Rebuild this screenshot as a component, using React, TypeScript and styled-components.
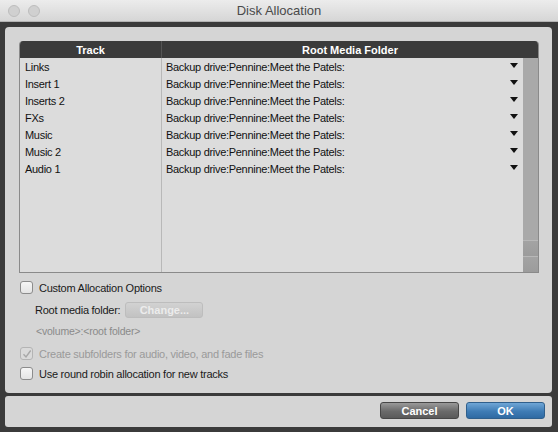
import React from 'react';
import styled, { createGlobalStyle } from 'styled-components';

const GlobalStyle = createGlobalStyle`
  html, body {
    margin: 0;
    padding: 0;
    background: #3b3b3b;
  }
  body {
    font-family: 'Liberation Sans', Arial, sans-serif;
  }
`;

const tracks = ['Links', 'Insert 1', 'Inserts 2', 'FXs', 'Music', 'Music 2', 'Audio 1'];
const ROOT = 'Backup drive:Pennine:Meet the Patels:';

const Window = styled.div`
  width: 558px;
  height: 432px;
  display: flex;
  flex-direction: column;
  background: #3b3b3b;
  overflow: hidden;
`;

const TitleBar = styled.div`
  height: 22px;
  flex: none;
  display: flex;
  align-items: center;
  position: relative;
  background: linear-gradient(#ececec, #d6d6d6);
  border-bottom: 1px solid #b4b4b4;
  box-sizing: border-box;
`;

const Lights = styled.div`
  display: flex;
  gap: 8px;
  padding-left: 8px;
`;

const Light = styled.span`
  width: 12px;
  height: 12px;
  border-radius: 50%;
  background: #d0d0d0;
  border: 1px solid #bdbdbd;
  box-sizing: border-box;
`;

const Title = styled.div`
  position: absolute;
  left: 0;
  right: 0;
  text-align: center;
  font-size: 13px;
  color: #4a4a4a;
  pointer-events: none;
`;

const Body = styled.div`
  flex: 1;
  display: flex;
  flex-direction: column;
  gap: 3px;
  padding: 5px 6px 5px 5px;
`;

const Panel = styled.div`
  height: 366px;
  box-sizing: border-box;
  background: #d5d5d5;
  border-radius: 4px;
  padding: 14px 13px 0 14px;
  display: flex;
  flex-direction: column;
`;

const Table = styled.div`
  height: 232px;
  display: grid;
  grid-template-columns: 141px 1fr 15px;
  grid-template-rows: 17px 1fr;
  border: 1px solid #8a8a8a;
  border-top: none;
  border-radius: 4px 4px 0 0;
  overflow: hidden;
  box-sizing: border-box;
  background: #dcdcdc;
`;

const HeadCell = styled.div<{ wide?: boolean }>`
  background: #3b3b3b;
  color: #fff;
  font-weight: bold;
  font-size: 11px;
  display: flex;
  align-items: center;
  justify-content: center;
  grid-column: ${p => (p.wide ? '2 / 4' : 'auto')};
  border-left: ${p => (p.wide ? '1px solid #555' : 'none')};
`;

const Column = styled.div<{ divider?: boolean }>`
  display: flex;
  flex-direction: column;
  border-left: ${p => (p.divider ? '1px solid #b8b8b8' : 'none')};
`;

const Row = styled.div<{ inset: number }>`
  height: 17px;
  display: flex;
  align-items: center;
  justify-content: space-between;
  font-size: 11px;
  letter-spacing: -0.3px;
  color: #111;
  padding: 0 5px 0 ${p => p.inset}px;
`;

const Arrow = styled.span`
  width: 0;
  height: 0;
  border-left: 4px solid transparent;
  border-right: 4px solid transparent;
  border-top: 5px solid #111;
  margin-bottom: 2px;
`;

const Scrollbar = styled.div`
  display: flex;
  flex-direction: column;
  background: #a9a9a9;
`;

const ScrollTrack = styled.div`
  flex: 1;
`;

const ScrollButton = styled.div`
  height: 16px;
  background: linear-gradient(#a3a3a3, #9c9c9c);
  border-top: 1px solid #b8b8b8;
  box-sizing: border-box;
`;

const Options = styled.div`
  display: flex;
  flex-direction: column;
  padding-top: 8px;
`;

const CheckRow = styled.label<{ disabled?: boolean }>`
  display: flex;
  align-items: center;
  gap: 6px;
  height: 13px;
  margin-left: 1px;
  font-size: 11px;
  letter-spacing: -0.25px;
  color: ${p => (p.disabled ? '#9a9a9a' : '#1a1a1a')};
`;

const Box = styled.span<{ disabled?: boolean }>`
  width: 13px;
  height: 13px;
  box-sizing: border-box;
  border-radius: 3px;
  border: 1px solid ${p => (p.disabled ? '#b4b4b4' : '#8c8c8c')};
  background: ${p => (p.disabled ? '#dadada' : 'linear-gradient(#f6f6f6, #e4e4e4)')};
  display: flex;
  align-items: center;
  justify-content: center;
`;

const FolderRow = styled.div`
  display: flex;
  align-items: center;
  gap: 5px;
  margin: 8px 0 0 16px;
  font-size: 11px;
  letter-spacing: -0.25px;
  color: #1a1a1a;
`;

const ChangeButton = styled.div`
  width: 78px;
  height: 16px;
  box-sizing: border-box;
  border-radius: 3px;
  border: 1px solid #bdbdbd;
  background: linear-gradient(#d2d2d2, #c2c2c2);
  color: #ececec;
  font-weight: bold;
  font-size: 11px;
  letter-spacing: 0;
  display: flex;
  align-items: center;
  justify-content: center;
`;

const Hint = styled.div`
  margin: 7px 0 0 17px;
  font-size: 10.5px;
  letter-spacing: -0.2px;
  color: #8a8a8a;
  height: 13px;
`;

const Spacer = styled.div<{ h: number }>`
  height: ${p => p.h}px;
`;

const Footer = styled.div`
  height: 31px;
  box-sizing: border-box;
  background: #d5d5d5;
  border-radius: 3px;
  display: flex;
  align-items: center;
  justify-content: flex-end;
  gap: 7px;
  padding: 0 7px 2px 0;
`;

const Button = styled.div<{ primary?: boolean }>`
  width: 79px;
  height: 17px;
  box-sizing: border-box;
  border-radius: 3px;
  border: 1px solid ${p => (p.primary ? '#2f5f8c' : '#474747')};
  background: ${p =>
    p.primary ? 'linear-gradient(#6fa6d6, #3f7cb5 55%, #2f6aa3)' : 'linear-gradient(#9a9a9a, #6a6a6a 55%, #5a5a5a)'};
  color: #fff;
  font-weight: bold;
  font-size: 11px;
  display: flex;
  align-items: center;
  justify-content: center;
`;

const Check = () => (
  <svg width="10" height="10" viewBox="0 0 10 10">
    <path d="M1.5 5.2 L4 8 L8.7 1.5" fill="none" stroke="#a8a8a8" strokeWidth="1.4" />
  </svg>
);

export default function App() {
  return (
    <>
      <GlobalStyle />
      <Window>
        <TitleBar>
          <Lights>
            <Light />
            <Light />
          </Lights>
          <Title>Disk Allocation</Title>
        </TitleBar>
        <Body>
          <Panel>
            <Table>
              <HeadCell>Track</HeadCell>
              <HeadCell wide>Root Media Folder</HeadCell>
              <Column>
                {tracks.map(t => (
                  <Row key={t} inset={5}>
                    {t}
                  </Row>
                ))}
              </Column>
              <Column divider>
                {tracks.map(t => (
                  <Row key={t} inset={4}>
                    {ROOT}
                    <Arrow />
                  </Row>
                ))}
              </Column>
              <Scrollbar>
                <ScrollTrack />
                <ScrollButton />
                <ScrollButton />
              </Scrollbar>
            </Table>
            <Options>
              <CheckRow>
                <Box />
                Custom Allocation Options
              </CheckRow>
              <FolderRow>
                Root media folder:
                <ChangeButton>Change...</ChangeButton>
              </FolderRow>
              <Hint>&lt;volume&gt;:&lt;root folder&gt;</Hint>
              <Spacer h={9} />
              <CheckRow disabled>
                <Box disabled>
                  <Check />
                </Box>
                Create subfolders for audio, video, and fade files
              </CheckRow>
              <Spacer h={7} />
              <CheckRow>
                <Box />
                Use round robin allocation for new tracks
              </CheckRow>
            </Options>
          </Panel>
          <Footer>
            <Button>Cancel</Button>
            <Button primary>OK</Button>
          </Footer>
        </Body>
      </Window>
    </>
  );
}
